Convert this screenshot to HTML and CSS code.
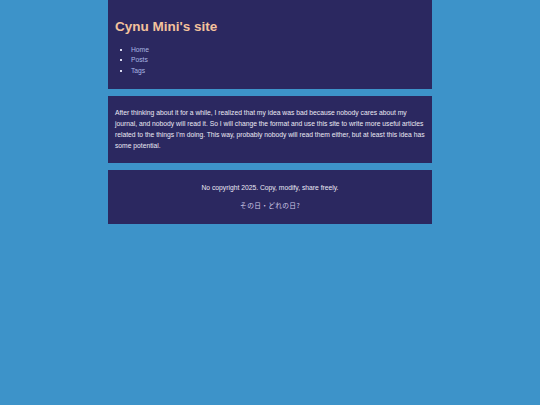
FILE: index.html
```html
<!DOCTYPE html>
<html lang="en">
<head>
<meta charset="utf-8">
<title>Cynu Mini's site</title>
<link rel="stylesheet" href="styles.css">
</head>
<body>
<div class="page">
  <header class="panel header">
    <h1 class="title">Cynu Mini's site</h1>
    <ul class="nav">
      <li><a href="#">Home</a></li>
      <li><a href="#">Posts</a></li>
      <li><a href="#">Tags</a></li>
    </ul>
  </header>
  <main class="panel">
    <p>After thinking about it for a while, I realized that my idea was bad because nobody cares about my journal, and nobody will read it. So I will change the format and use this site to write more useful articles related to the things I'm doing. This way, probably nobody will read them either, but at least this idea has some potential.</p>
  </main>
  <footer class="panel footer">
    <p>No copyright 2025. Copy, modify, share freely.</p>
    <p class="jp">その日・どれの日?</p>
  </footer>
</div>
</body>
</html>
```
FILE: styles.css
```css
html, body {
  margin: 0;
  padding: 0;
}
body {
  background: #3d93c9;
  font-family: "Liberation Sans", Arial, sans-serif;
  font-size: 6.74px;
  line-height: 1.6;
  color: #ece8f4;
}
.page {
  width: 324px;
  margin: 0 auto;
  display: flex;
  flex-direction: column;
  gap: 7px;
}
.panel {
  background: #2b2860;
  padding: 6px 7px;
}
.panel p {
  margin: 5.8px 0;
}
.header {
  padding-bottom: 6px;
}
.title {
  font-size: 13.5px;
  line-height: 1.2;
  margin: 13px 0 9.5px;
  color: #f3c29c;
  font-weight: bold;
}
.nav {
  margin: 0 0 6.5px;
  padding-left: 16px;
  list-style: square;
  color: #d8d8ee;
}
.nav a {
  color: #a9b6e2;
  text-decoration: none;
}
.footer {
  text-align: center;
  padding-top: 7.3px;
  padding-bottom: 8px;
}
.footer p.jp {
  font-family: "Noto Sans CJK JP", "Liberation Sans", sans-serif;
  line-height: 10.8px;
  height: 10.8px;
  margin-top: 4.6px;
  color: #cfc8e6;
  letter-spacing: 0.3px;
}
```
